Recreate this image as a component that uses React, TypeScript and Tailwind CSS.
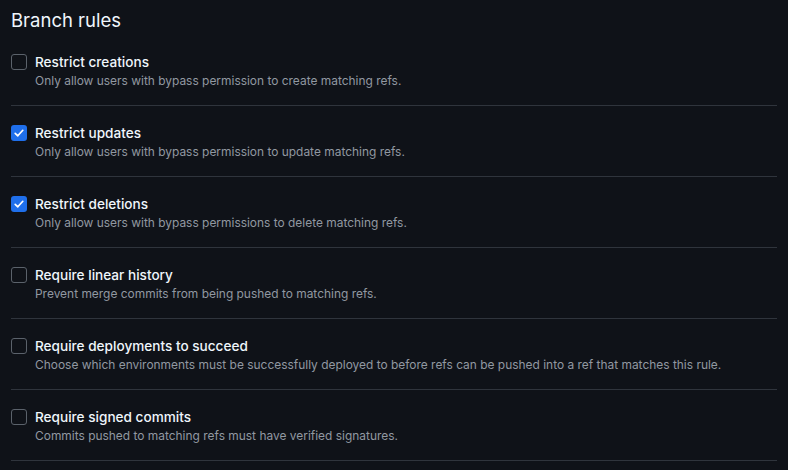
import React from "react";

const rules = [
  { title: "Restrict creations", desc: "Only allow users with bypass permission to create matching refs.", checked: false },
  { title: "Restrict updates", desc: "Only allow users with bypass permission to update matching refs.", checked: true },
  { title: "Restrict deletions", desc: "Only allow users with bypass permissions to delete matching refs.", checked: true },
  { title: "Require linear history", desc: "Prevent merge commits from being pushed to matching refs.", checked: false },
  { title: "Require deployments to succeed", desc: "Choose which environments must be successfully deployed to before refs can be pushed into a ref that matches this rule.", checked: false },
  { title: "Require signed commits", desc: "Commits pushed to matching refs must have verified signatures.", checked: false },
];

function Box({ checked }: { checked: boolean }) {
  if (checked) {
    return (
      <div className="mt-[2px] flex h-[16px] w-[16px] shrink-0 items-center justify-center rounded-[3px] bg-[#1f6feb]">
        <svg width="12" height="12" viewBox="0 0 12 12" fill="none">
          <path d="M2.2 6.3 L4.8 8.8 L9.8 3.3" stroke="white" strokeWidth="1.7" strokeLinecap="round" strokeLinejoin="round" />
        </svg>
      </div>
    );
  }
  return <div className="mt-[2px] h-[16px] w-[16px] shrink-0 rounded-[3px] border border-[#5b626b]" />;
}

export default function App() {
  return (
    <div className="min-h-[470px] w-full bg-[#0f1218] px-[11px] pt-[6px] font-['Inter','Noto_Sans',sans-serif]">
      <h2 className="h-[29px] text-[18.5px] leading-[29px] text-[#f0f6fc]">Branch rules</h2>
      <div>
        {rules.map((r) => (
          <div key={r.title} className="flex gap-[8px] border-b border-[#2f343c] pt-[17px] pb-[15px] pr-[10px]">
            <Box checked={r.checked} />
            <div>
              <div className="text-[13.6px] font-medium leading-[20px] text-[#f0f6fc]">{r.title}</div>
              <div className="text-[11.95px] leading-[18px] text-[#9198a1]">{r.desc}</div>
            </div>
          </div>
        ))}
      </div>
    </div>
  );
}
